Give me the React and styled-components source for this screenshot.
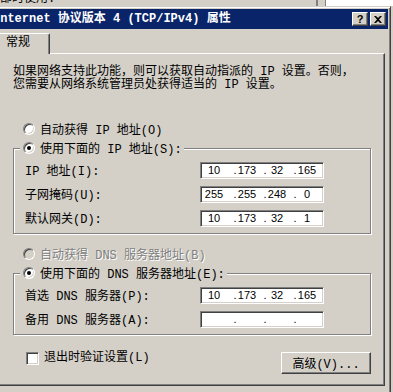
import React from 'react'
import styled, { createGlobalStyle } from 'styled-components'

const UI_FONT = `"Liberation Mono", "Noto Sans CJK SC", monospace`

const GlobalStyle = createGlobalStyle`
  html, body {
    margin: 0;
    padding: 0;
    background: #d4d0c8;
    overflow: hidden;
  }
  body {
    width: 393px;
    height: 392px;
    font-family: ${UI_FONT};
    font-size: 12px;
    color: #000;
  }
`

const IpField = ({ value }) => {
  const parts = value || ['', '', '', '']
  return (
    <IpBox>
      {parts.map((p, i) => (
        <Seg key={i}>
          {i > 0 && <Dot>.</Dot>}
          <Num>{p}</Num>
        </Seg>
      ))}
    </IpBox>
  )
}

const Radio = ({ checked, disabled }) => (
  <RadioDot $checked={checked} $disabled={disabled} />
)

const App = () => {
  return (
    <Page>
      <GlobalStyle />
      <BackStrip>
        <BackText>部时使用.</BackText>
        <BackRail />
        <BackPane />
      </BackStrip>
      <Window>
        <TitleBar>
          <TitleText>Internet 协议版本 4 (TCP/IPv4) 属性</TitleText>
          <CaptionButtons>
            <CaptionButton>?</CaptionButton>
            <CaptionButton>
              <svg width="8" height="7" viewBox="0 0 8 7">
                <path d="M0 0h2l2 2 2-2h2L5 3.5 8 7H6L4 5 2 7H0l3-3.5z" fill="#000" />
              </svg>
            </CaptionButton>
          </CaptionButtons>
        </TitleBar>
        <Body>
          <Tabs>
            <Tab>常规</Tab>
          </Tabs>
          <Panel>
            <Intro>
              如果网络支持此功能，则可以获取自动指派的 IP 设置。否则，
              <br />
              您需要从网络系统管理员处获得适当的 IP 设置。
            </Intro>

            <OptionRow $top={30}>
              <Radio />
              <span>自动获得 IP 地址(O)</span>
            </OptionRow>
            <Group>
              <Legend>
                <Radio checked />
                <span>使用下面的 IP 地址(S):</span>
              </Legend>
              <Rows>
                <FieldRow>
                  <span>IP 地址(I):</span>
                  <IpField value={['10', '173', '32', '165']} />
                </FieldRow>
                <FieldRow>
                  <span>子网掩码(U):</span>
                  <IpField value={['255', '255', '248', '0']} />
                </FieldRow>
                <FieldRow>
                  <span>默认网关(D):</span>
                  <IpField value={['10', '173', '32', '1']} />
                </FieldRow>
              </Rows>
            </Group>

            <OptionRow $top={13} $disabled>
              <Radio disabled />
              <span>自动获得 DNS 服务器地址(B)</span>
            </OptionRow>
            <Group>
              <Legend>
                <Radio checked />
                <span>使用下面的 DNS 服务器地址(E):</span>
              </Legend>
              <Rows>
                <FieldRow>
                  <span>首选 DNS 服务器(P):</span>
                  <IpField value={['10', '173', '32', '165']} />
                </FieldRow>
                <FieldRow>
                  <span>备用 DNS 服务器(A):</span>
                  <IpField />
                </FieldRow>
              </Rows>
            </Group>

            <BottomRow>
              <CheckLabel>
                <CheckBox />
                <span>退出时验证设置(L)</span>
              </CheckLabel>
              <PushButton>高级(V)...</PushButton>
            </BottomRow>
          </Panel>
        </Body>
      </Window>
    </Page>
  )
}

const Page = styled.div`
  width: 393px;
  height: 392px;
  overflow: hidden;
`

const BackStrip = styled.div`
  display: flex;
  height: 6px;
  overflow: hidden;
`

const BackText = styled.div`
  flex: 0 0 316px;
  margin-top: -7px;
  line-height: 13px;
  color: #000;
  white-space: nowrap;
`

const BackRail = styled.div`
  flex: 0 0 7px;
  border-left: 2px solid #808080;
  border-right: 1px solid #808080;
`

const BackPane = styled.div`
  flex: 1;
  background: #fff;
`

const Window = styled.div`
  margin-left: -10px;
  width: 401px;
  height: 420px;
  box-sizing: border-box;
  background: #d4d0c8;
  border: 1px solid;
  border-color: #d4d0c8 #404040 #404040 #d4d0c8;
  box-shadow: inset 1px 1px #fff, inset -1px -1px #808080;
  padding: 2px;
`

const TitleBar = styled.div`
  height: 20px;
  background: #0a246a;
  display: flex;
  align-items: center;
  justify-content: space-between;
  padding-right: 2px;
`

const TitleText = styled.div`
  color: #fff;
  font-weight: bold;
  font-size: 12px;
  white-space: nowrap;
  line-height: 20px;
`

const CaptionButtons = styled.div`
  display: flex;
  gap: 2px;
`

const CaptionButton = styled.div`
  width: 16px;
  height: 14px;
  box-sizing: border-box;
  background: #d4d0c8;
  border: 1px solid;
  border-color: #fff #404040 #404040 #fff;
  box-shadow: inset -1px -1px #808080;
  display: flex;
  align-items: center;
  justify-content: center;
  font-family: "Liberation Sans", sans-serif;
  font-weight: bold;
  font-size: 11px;
  line-height: 12px;
  color: #000;
`

const Body = styled.div`
  padding: 4px 3px 0 5px;
`

const Tabs = styled.div`
  display: flex;
`

const Tab = styled.div`
  position: relative;
  z-index: 1;
  width: 52px;
  height: 21px;
  margin-bottom: -1px;
  box-sizing: border-box;
  background: #d4d0c8;
  border-top: 1px solid #fff;
  border-left: 1px solid #fff;
  border-right: 1px solid #404040;
  box-shadow: inset -1px 0 #808080;
  border-radius: 2px 2px 0 0;
  padding-left: 7px;
  line-height: 19px;
`

const Panel = styled.div`
  border: 1px solid;
  border-color: #fff #404040 #404040 #fff;
  box-shadow: inset -1px -1px #808080;
  padding: 0 13px 11px 14px;
`

const Intro = styled.p`
  margin: 12px 0 0;
  line-height: 13px;
  white-space: nowrap;
`

const OptionRow = styled.div`
  display: flex;
  align-items: center;
  gap: 5px;
  height: 14px;
  margin-top: ${(p) => p.$top}px;
  padding-left: 10px;
  white-space: nowrap;
  color: ${(p) => (p.$disabled ? '#808080' : '#000')};
  text-shadow: ${(p) => (p.$disabled ? '1px 1px 0 #fff' : 'none')};
`

const RadioDot = styled.span`
  flex: 0 0 auto;
  width: 12px;
  height: 12px;
  box-sizing: border-box;
  border-radius: 50%;
  border: 1px solid;
  border-color: #808080 #fff #fff #808080;
  box-shadow: inset 1px 1px #404040, inset -1px -1px #d4d0c8;
  background: ${(p) => (p.$disabled ? '#d4d0c8' : '#fff')};
  display: flex;
  align-items: center;
  justify-content: center;
  &::after {
    content: '';
    display: ${(p) => (p.$checked ? 'block' : 'none')};
    width: 4px;
    height: 4px;
    border-radius: 50%;
    background: #000;
  }
`

const Group = styled.fieldset`
  margin: 5px 0 0;
  padding: 6px 0 7px 6px;
  min-width: 0;
  border: 1px solid #808080;
  box-shadow: inset 1px 1px #fff, 1px 1px #fff;
`

const Legend = styled.legend`
  display: flex;
  align-items: center;
  gap: 5px;
  height: 14px;
  margin: 0;
  padding: 0 2px 0 3px;
  background: #d4d0c8;
  white-space: nowrap;
`

const Rows = styled.div`
  display: flex;
  flex-direction: column;
  gap: 7px;
  padding-left: 5px;
`

const FieldRow = styled.div`
  display: grid;
  grid-template-columns: 175px 124px;
  align-items: center;
  height: 17px;
  white-space: nowrap;
`

const IpBox = styled.div`
  width: 124px;
  height: 17px;
  box-sizing: border-box;
  background: #fff;
  border: 1px solid;
  border-color: #808080 #fff #fff #808080;
  box-shadow: inset 1px 1px #404040, inset -1px -1px #d4d0c8;
  display: flex;
  align-items: center;
  padding-left: 1px;
  font-family: "Liberation Sans", sans-serif;
  font-size: 11px;
  line-height: 15px;
`

const Seg = styled.span`
  display: flex;
  width: 30px;
`

const Dot = styled.span`
  width: 6px;
  text-align: center;
`

const Num = styled.span`
  flex: 1;
  margin-left: -6px;
  text-align: center;
`

const BottomRow = styled.div`
  display: flex;
  justify-content: space-between;
  align-items: flex-start;
  margin-top: 17px;
`

const CheckLabel = styled.label`
  display: flex;
  align-items: center;
  gap: 5px;
  height: 13px;
  padding-left: 13px;
  line-height: 13px;
  white-space: nowrap;
`

const CheckBox = styled.span`
  width: 13px;
  height: 13px;
  box-sizing: border-box;
  background: #fff;
  border: 1px solid;
  border-color: #808080 #fff #fff #808080;
  box-shadow: inset 1px 1px #404040, inset -1px -1px #d4d0c8;
`

const PushButton = styled.button`
  width: 90px;
  height: 22px;
  box-sizing: border-box;
  padding: 0;
  background: #d4d0c8;
  border: 1px solid;
  border-color: #fff #404040 #404040 #fff;
  box-shadow: inset -1px -1px #808080;
  font-family: ${UI_FONT};
  font-size: 12px;
  color: #000;
`

export default App
